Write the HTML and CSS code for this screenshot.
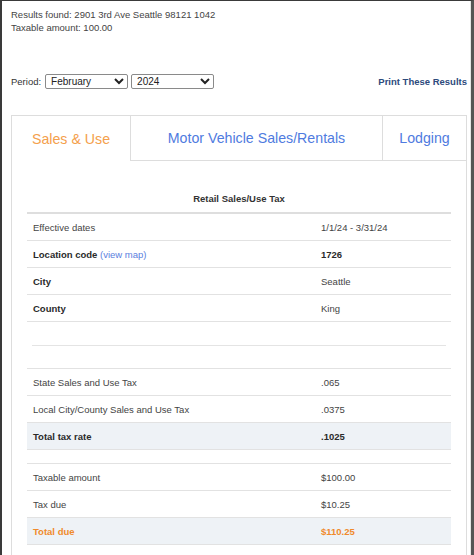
FILE: index.html
```html
<!DOCTYPE html>
<html>
<head>
<meta charset="utf-8">
<link rel="stylesheet" href="styles.css">
</head>
<body>
<div class="frame">
  <div class="page">
    <div class="summary">
      <div>Results found: 2901 3rd Ave Seattle 98121 1042</div>
      <div>Taxable amount: 100.00</div>
    </div>
    <div class="period-row">
      <div class="period">
        <span class="period-label">Period:</span>
        <select class="sel">
          <option>February</option>
        </select>
        <select class="sel">
          <option>2024</option>
        </select>
      </div>
      <a class="print" href="#">Print These Results</a>
    </div>
    <div class="tabs">
      <div class="tab active">Sales &amp; Use</div>
      <div class="tab">Motor Vehicle Sales/Rentals</div>
      <div class="tab">Lodging</div>
    </div>
    <div class="panel">
      <div class="title">Retail Sales/Use Tax</div>
      <div class="tbl first">
        <div class="row"><div class="c1">Effective dates</div><div class="c2">1/1/24 - 3/31/24</div></div>
        <div class="row"><div class="c1 b">Location code <a class="map" href="#">(view map)</a></div><div class="c2 b">1726</div></div>
        <div class="row"><div class="c1 b">City</div><div class="c2">Seattle</div></div>
        <div class="row"><div class="c1 b">County</div><div class="c2">King</div></div>
      </div>
      <div class="spacer"><div class="rule"></div></div>
      <div class="tbl">
        <div class="row"><div class="c1">State Sales and Use Tax</div><div class="c2">.065</div></div>
        <div class="row"><div class="c1">Local City/County Sales and Use Tax</div><div class="c2">.0375</div></div>
        <div class="row shade"><div class="c1 b">Total tax rate</div><div class="c2 b">.1025</div></div>
      </div>
      <div class="gap"></div>
      <div class="tbl">
        <div class="row"><div class="c1">Taxable amount</div><div class="c2">$100.00</div></div>
        <div class="row"><div class="c1">Tax due</div><div class="c2">$10.25</div></div>
        <div class="row shade due"><div class="c1 b">Total due</div><div class="c2 b">$110.25</div></div>
      </div>
    </div>
  </div>
</div>
</body>
</html>
```
FILE: styles.css
```css
html, body {
  margin: 0;
  padding: 0;
  background: #ffffff;
  overflow: hidden;
}
body {
  font-family: "Liberation Sans", Arial, sans-serif;
  font-size: 9.5px;
  color: #444444;
}
.frame {
  width: 474px;
  height: 555px;
  box-sizing: border-box;
  border-left: 2px solid #3a3a3a;
  border-top: 1px solid #3a3a3a;
  border-right: 3px solid #555555;
  overflow: hidden;
}
.page {
  height: 100%;
  box-sizing: border-box;
  border-right: 1px solid #e4e4e4;
  padding: 7px 3px 0 9px;
}
.summary {
  line-height: 13px;
}
.period-row {
  display: flex;
  align-items: center;
  justify-content: space-between;
  margin-top: 40px;
  height: 15px;
}
.period {
  display: flex;
  align-items: center;
  gap: 3px;
}
.period-label {
  color: #333333;
  margin-right: 1px;
}
.sel {
  font-family: "Liberation Sans", Arial, sans-serif;
  font-size: 10px;
  width: 83px;
  height: 15px;
  padding: 0 1px;
  border: 1px solid #8a8a8a;
  border-radius: 2px;
  background: #ffffff;
  color: #222222;
}
.print {
  font-weight: bold;
  color: #2d4a7c;
  text-decoration: none;
}
.tabs {
  display: grid;
  grid-template-columns: 120px 252px 84px;
  margin-top: 26px;
  height: 46px;
}
.tab {
  display: flex;
  align-items: center;
  justify-content: center;
  font-size: 14.2px;
  color: #4f7be0;
  border: 1px solid #dddddd;
  border-left: none;
  box-sizing: border-box;
  background: #ffffff;
}
.tab.active {
  color: #f4a04c;
  border-left: 1px solid #dddddd;
  border-bottom: none;
}
.panel {
  width: 456px;
  box-sizing: border-box;
  border-left: 1px solid #dddddd;
  border-right: 1px solid #dddddd;
  padding: 24px 15px 0 15px;
  height: 400px;
}
.title {
  height: 27px;
  display: flex;
  align-items: center;
  justify-content: center;
  font-weight: bold;
  color: #333333;
}
.tbl {
  border-top: 1px solid #e2e2e2;
}
.tbl.first {
  border-top: 2px solid #dedede;
}
.row {
  display: grid;
  grid-template-columns: 288px 1fr;
  height: 27px;
  box-sizing: border-box;
  border-bottom: 1px solid #e2e2e2;
  align-items: center;
}
.c1, .c2 {
  padding-left: 6px;
}
.b {
  font-weight: bold;
  color: #2a2a2a;
}
.map {
  font-weight: normal;
  color: #5a80e0;
  text-decoration: none;
}
.shade {
  background: #eef2f6;
}
.due .b {
  color: #f08a2c;
}
.spacer {
  height: 46px;
  display: flex;
  align-items: center;
  padding: 0 5px;
  box-sizing: border-box;
}
.rule {
  flex: 1;
  height: 1px;
  background: #e4e4e4;
}
.gap {
  height: 13px;
}
```
